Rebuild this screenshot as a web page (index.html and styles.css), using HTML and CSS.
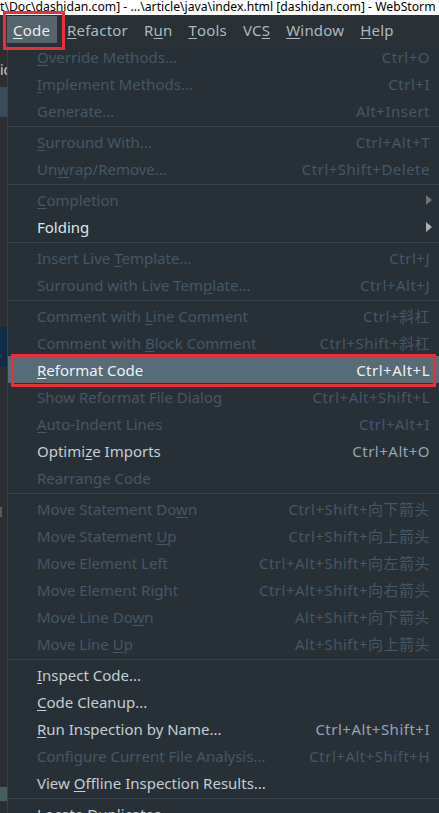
FILE: index.html
```
<!DOCTYPE html>
<html>
<head>
<meta charset="utf-8">
<link rel="stylesheet" href="styles.css">
</head>
<body>
<div class="titlebar">t\Doc\dashidan.com] - ...\article\java\index.html [dashidan.com] - WebStorm</div>
<div class="menubar">
  <span class="mitem active"><u>C</u>ode</span>
  <span class="mitem"><u>R</u>efactor</span>
  <span class="mitem">R<u>u</u>n</span>
  <span class="mitem"><u>T</u>ools</span>
  <span class="mitem">VC<u>S</u></span>
  <span class="mitem"><u>W</u>indow</span>
  <span class="mitem"><u>H</u>elp</span>
  <span class="redbox code-box"></span>
</div>
<div class="main">
  <div class="strip">
    <div class="s s1"></div>
    <div class="s s2">ic</div>
    <div class="s s3"></div>
    <div class="s s4"></div>
    <div class="s s5"></div>
    <div class="s s6"></div>
    <div class="s s7"></div>
    <div class="s s8"></div>
    <div class="s s9"></div>
    <div class="s s10"></div>
  </div>
  <div class="popup">
    <div class="row dis"><span class="lbl"><u>O</u>verride Methods...</span><span class="sc">Ctrl+O</span></div>
    <div class="row dis"><span class="lbl"><u>I</u>mplement Methods...</span><span class="sc">Ctrl+I</span></div>
    <div class="row dis"><span class="lbl">Generate...</span><span class="sc">Alt+Insert</span></div>
    <div class="sep"></div>
    <div class="row dis"><span class="lbl"><u>S</u>urround With...</span><span class="sc">Ctrl+Alt+T</span></div>
    <div class="row dis"><span class="lbl">Un<u>w</u>rap/Remove...</span><span class="sc">Ctrl+Shift+Delete</span></div>
    <div class="sep"></div>
    <div class="row dis"><span class="lbl"><u>C</u>ompletion</span><span class="arrow dim"></span></div>
    <div class="row en bright"><span class="lbl">Folding</span><span class="arrow"></span></div>
    <div class="sep"></div>
    <div class="row dis"><span class="lbl">Insert Live <u>T</u>emplate...</span><span class="sc">Ctrl+J</span></div>
    <div class="row dis"><span class="lbl">Surround with Live Tem<u>p</u>late...</span><span class="sc">Ctrl+Alt+J</span></div>
    <div class="sep"></div>
    <div class="row dis"><span class="lbl">Comment with <u>L</u>ine Comment</span><span class="sc">Ctrl+斜杠</span></div>
    <div class="row dis"><span class="lbl">Comment with <u>B</u>lock Comment</span><span class="sc">Ctrl+Shift+斜杠</span></div>
    <div class="row en sel"><span class="lbl"><u>R</u>eformat Code</span><span class="sc">Ctrl+Alt+L</span><span class="redbox row-box"></span></div>
    <div class="row dis"><span class="lbl">Show Reformat File Dialog</span><span class="sc">Ctrl+Alt+Shift+L</span></div>
    <div class="row dis"><span class="lbl"><u>A</u>uto-Indent Lines</span><span class="sc">Ctrl+Alt+I</span></div>
    <div class="row en"><span class="lbl">Optimi<u>z</u>e Imports</span><span class="sc">Ctrl+Alt+O</span></div>
    <div class="row dis"><span class="lbl">Rearrange Code</span></div>
    <div class="sep"></div>
    <div class="row dis"><span class="lbl">Move Statement Do<u>w</u>n</span><span class="sc">Ctrl+Shift+向下箭头</span></div>
    <div class="row dis"><span class="lbl">Move Statement <u>U</u>p</span><span class="sc">Ctrl+Shift+向上箭头</span></div>
    <div class="row dis"><span class="lbl">Move Element Left</span><span class="sc">Ctrl+Alt+Shift+向左箭头</span></div>
    <div class="row dis"><span class="lbl">Move Element Right</span><span class="sc">Ctrl+Alt+Shift+向右箭头</span></div>
    <div class="row dis"><span class="lbl">Move Line Do<u>w</u>n</span><span class="sc">Alt+Shift+向下箭头</span></div>
    <div class="row dis"><span class="lbl">Move Line <u>U</u>p</span><span class="sc">Alt+Shift+向上箭头</span></div>
    <div class="sep"></div>
    <div class="row en"><span class="lbl"><u>I</u>nspect Code...</span></div>
    <div class="row en"><span class="lbl"><u>C</u>ode Cleanup...</span></div>
    <div class="row en"><span class="lbl"><u>R</u>un Inspection by Name...</span><span class="sc">Ctrl+Alt+Shift+I</span></div>
    <div class="row dis"><span class="lbl">Configure Current File Analysis...</span><span class="sc">Ctrl+Alt+Shift+H</span></div>
    <div class="row en"><span class="lbl">View <u>O</u>ffline Inspection Results...</span></div>
    <div class="sep"></div>
    <div class="row en"><span class="lbl">Locate Duplicates...</span></div>
  </div>
</div>
</body>
</html>
```
FILE: styles.css
```
html, body {
  margin: 0;
  padding: 0;
}
body {
  width: 439px;
  height: 813px;
  overflow: hidden;
  background: #2b3035;
  font-family: "Noto Sans", "Noto Sans CJK SC", sans-serif;
}
u {
  text-decoration: underline;
  text-underline-offset: 2px;
  text-decoration-thickness: 1px;
}
.titlebar {
  height: 15px;
  background: #ffffff;
  color: #000000;
  font-size: 12.2px;
  line-height: 13px;
  white-space: nowrap;
  overflow: hidden;
}
.menubar {
  position: relative;
  height: 30px;
  background: #293036;
  display: flex;
  align-items: stretch;
  padding-left: 7px;
  font-size: 15px;
  color: #aeb9c0;
}
.mitem {
  display: flex;
  align-items: center;
  padding: 0 7px 0 7px;
  margin-right: 2px;
  height: 27px;
  margin-top: 1px;
  letter-spacing: 0.2px;
}
.mitem.active {
  background: #55656d;
  color: #e9eef0;
  padding: 0 7px 0 6px;
  margin-right: 3px;
}
.redbox {
  position: absolute;
  border: 3px solid #ee2e37;
  box-sizing: border-box;
  pointer-events: none;
}
.code-box {
  left: 3px;
  top: -4px;
  width: 62px;
  height: 39px;
}
.main {
  display: flex;
  height: 768px;
}
.strip {
  width: 7px;
  display: flex;
  flex-direction: column;
  background: #2b2f33;
  flex-shrink: 0;
}
.s { width: 7px; flex-shrink: 0; }
.s1 { height: 15px; }
.s2 { height: 20px; color: #c9d3d8; font-size: 14px; line-height: 20px; overflow: hidden; }
.s3 { height: 7px; }
.s4 { height: 30px; background: #3c4b5b; }
.s5 { height: 210px; }
.s6 { height: 40px; background: #0f2c46; }
.s7 { height: 140px; }
.s8 { height: 10px; background: #5a5d4a; width: 2px; }
.s9 { height: 270px; }
.s10 { height: 14px; background: #43605f; }
.popup {
  flex: 1;
  background: #283037;
  border-left: 1px solid #36424b;
  border-top: 1px solid #323d46;
  margin-top: -4px;
  padding-top: 1px;
  overflow: hidden;
  min-width: 0;
}
.row {
  position: relative;
  height: 27px;
  display: flex;
  align-items: center;
  justify-content: space-between;
  padding: 0 9px 0 29px;
  font-size: 15px;
  white-space: nowrap;
}
.row.dis { color: #435868; }
.row.en { color: #c3ced5; }
.row.en .sc { color: #92a6b4; }
.row.bright { color: #dfe5e9; }
.row.sel { background: #566c76; color: #eef2f4; }
.row.sel .sc { color: #eef2f4; }
.row .sc { font-size: 15px; letter-spacing: 0.5px; }
.row-box {
  left: 3px;
  top: -2px;
  right: 3px;
  bottom: -4px;
}
.sep {
  height: 4px;
  display: flex;
  align-items: center;
}
.sep::before {
  content: "";
  display: block;
  height: 1px;
  width: 100%;
  background: #36434d;
}
.arrow {
  width: 0;
  height: 0;
  border-top: 5px solid transparent;
  border-bottom: 5px solid transparent;
  border-left: 6px solid #aab2b8;
  margin-right: -2px;
}
.arrow.dim { border-left-color: #6b747a; }
```
